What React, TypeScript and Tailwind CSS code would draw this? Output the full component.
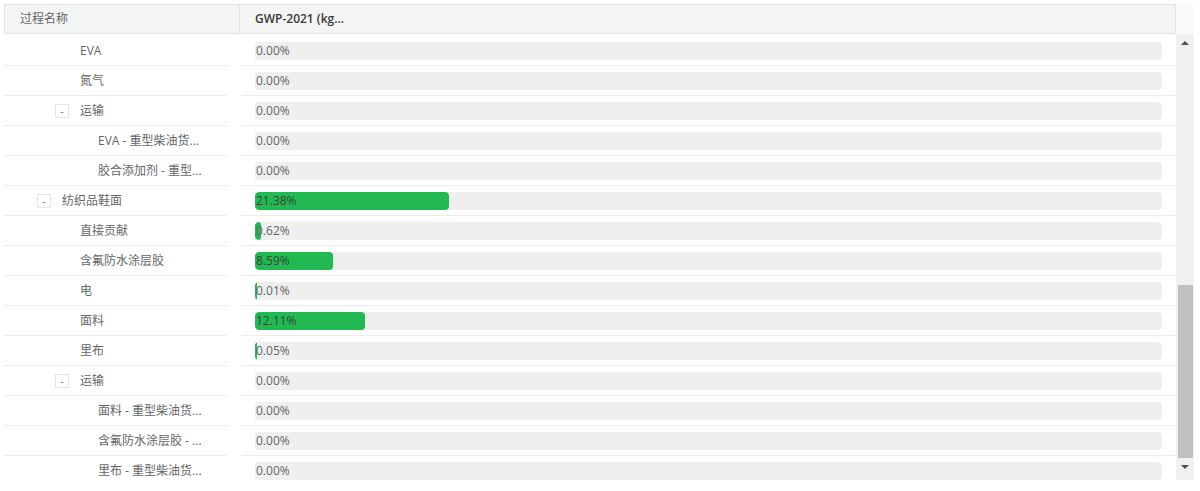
import React from "react";

type Row = { name: string; depth: number; toggle?: boolean; pct: number };

const rows: Row[] = [
  { name: "EVA", depth: 1, pct: 0 },
  { name: "氮气", depth: 1, pct: 0 },
  { name: "运输", depth: 1, toggle: true, pct: 0 },
  { name: "EVA - 重型柴油货...", depth: 2, pct: 0 },
  { name: "胶合添加剂 - 重型...", depth: 2, pct: 0 },
  { name: "纺织品鞋面", depth: 0, toggle: true, pct: 21.38 },
  { name: "直接贡献", depth: 1, pct: 0.62 },
  { name: "含氟防水涂层胶", depth: 1, pct: 8.59 },
  { name: "电", depth: 1, pct: 0.01 },
  { name: "面料", depth: 1, pct: 12.11 },
  { name: "里布", depth: 1, pct: 0.05 },
  { name: "运输", depth: 1, toggle: true, pct: 0 },
  { name: "面料 - 重型柴油货...", depth: 2, pct: 0 },
  { name: "含氟防水涂层胶 - ...", depth: 2, pct: 0 },
  { name: "里布 - 重型柴油货...", depth: 2, pct: 0 },
];

const font = { fontFamily: '"Open Sans", "Noto Sans CJK SC", sans-serif' };

function TreeCell({ r }: { r: Row }) {
  return (
    <div className="flex h-full w-[223px] shrink-0 items-center border-b border-[#ececec] text-[12px] text-[#666]">
      <div style={{ width: 33 + r.depth * 18 }} className="shrink-0" />
      {r.toggle ? (
        <div className="mr-[11px] flex h-[14px] w-[14px] shrink-0 items-center justify-center border border-[#e6e6e6] text-[11px] leading-none text-[#777]">
          -
        </div>
      ) : (
        <div className="mr-[11px] w-[14px] shrink-0" />
      )}
      <span className="whitespace-nowrap">{r.name}</span>
    </div>
  );
}

function BarCell({ pct }: { pct: number }) {
  const w = pct > 0 ? Math.max(2, (906 * pct) / 100) : 0;
  const big = w > 8;
  return (
    <div className="flex h-full flex-1 items-center border-b border-[#ececec] px-[14px]">
      <div className="relative h-[18px] w-full overflow-hidden rounded-[4px] bg-[#efefef]">
        {w > 0 && (
          <div
            className={`absolute left-0 top-0 h-full bg-[#22b852] ${big ? "rounded-[4px]" : "rounded-[3px]"}`}
            style={{ width: w }}
          />
        )}
        <span
          className={`absolute left-[1px] top-0 text-[12px] leading-[18px] ${pct >= 5 ? "text-[#2f4a35]" : "text-[#666]"}`}
        >
          {pct.toFixed(2)}%
        </span>
      </div>
    </div>
  );
}

export default function App() {
  return (
    <div className="bg-white p-[4px]" style={font}>
      <div className="flex h-[476px] w-[1190px] flex-col bg-white">
        {/* header */}
        <div className="flex h-[30px] shrink-0">
          <div className="flex flex-1 border border-[#e2e2e2] bg-[#f3f4f4]">
            <div className="flex w-[235px] shrink-0 items-center border-r border-[#e2e2e2] pl-[15px] text-[12px] text-[#666]">
              过程名称
            </div>
            <div className="flex flex-1 items-center pl-[15px] text-[12px] font-semibold text-[#3a3a3a]">
              GWP-2021 (kg...
            </div>
          </div>
          <div className="w-[18px] shrink-0 bg-[#fafafa]" />
        </div>
        {/* body */}
        <div className="flex min-h-0 flex-1">
          <div className="min-h-0 flex-1 overflow-hidden pt-[2px]">
            {rows.map((r, i) => (
              <div key={i} className="flex h-[30px]">
                <TreeCell r={r} />
                <div className="w-[14px] shrink-0" />
                <BarCell pct={r.pct} />
              </div>
            ))}
          </div>
          {/* scrollbar */}
          <div className="flex w-[18px] shrink-0 flex-col items-center bg-[#f1f1f1]">
            <div className="flex h-[18px] w-full items-center justify-center">
              <div className="h-0 w-0 border-x-[4px] border-b-[4px] border-x-transparent border-b-[#505050]" />
            </div>
            <div className="flex-1" />
            <div className="h-[173px] w-[15px] bg-[#c1c1c1]" />
            <div className="flex h-[18px] w-full items-center justify-center">
              <div className="h-0 w-0 border-x-[4px] border-t-[4px] border-x-transparent border-t-[#505050]" />
            </div>
            <div className="h-[4px]" />
          </div>
        </div>
      </div>
    </div>
  );
}
